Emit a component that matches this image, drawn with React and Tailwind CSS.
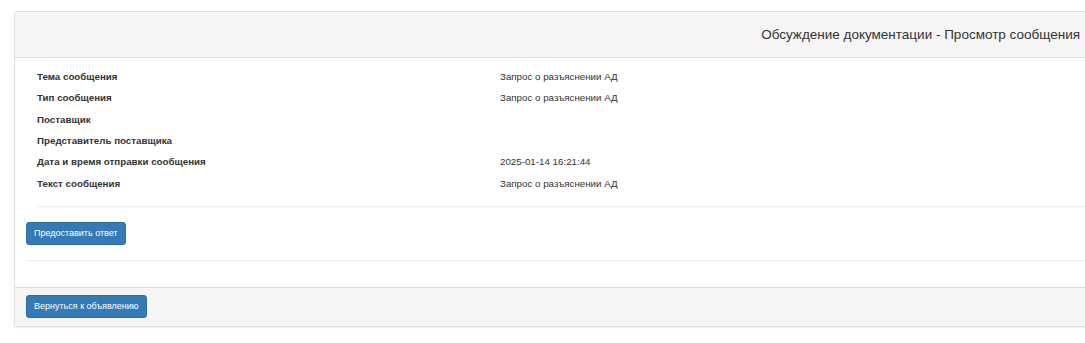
export default function App() {
  const rows = [
    ["Тема сообщения", "Запрос о разъяснении АД"],
    ["Тип сообщения", "Запрос о разъяснении АД"],
    ["Поставщик", ""],
    ["Представитель поставщика", ""],
    ["Дата и время отправки сообщения", "2025-01-14 16:21:44"],
    ["Текст сообщения", "Запрос о разъяснении АД"],
  ];
  return (
    <div className="w-[1085px] h-[343px] overflow-hidden bg-white text-[#333]" style={{ fontFamily: '"Liberation Sans", Arial, sans-serif' }}>
      <div className="pl-[14px] pt-[11px]">
        <div className="w-[1082px] border border-[#ddd] rounded-[3px] shadow-[0_1px_1px_rgba(0,0,0,0.05)]">
          <div className="h-[46px] bg-[#f5f5f5] border-b border-[#ddd] flex items-center justify-end pr-[15px]">
            <span className="text-[13.5px] leading-none">Обсуждение документации - Просмотр сообщения</span>
          </div>
          <div className="pl-[11px] pt-[8.5px]">
            <div className="pl-[11px]">
              {rows.map(([k, v], i) => (
                <div key={i} className="h-[21.4px] flex items-center text-[9.75px]">
                  <div className="w-[463px] font-bold">{k}</div>
                  <div>{v}</div>
                </div>
              ))}
              <div className="mt-[11.5px] border-t border-[#eee]" />
            </div>
            <div className="pt-[15px] flex">
              <button className="h-[23px] px-[7px] bg-[#337ab7] border border-[#2e6da4] rounded-[3px] text-white text-[9px] leading-none">
                Предоставить ответ
              </button>
            </div>
            <div className="mt-[15px] border-t border-[#eee]" />
            <div className="h-[26px]" />
          </div>
          <div className="bg-[#f5f5f5] border-t border-[#ddd] pl-[11px] pt-[7px] pb-[8px] flex">
            <button className="h-[23px] px-[7px] bg-[#337ab7] border border-[#2e6da4] rounded-[3px] text-white text-[9px] leading-none">
              Вернуться к объявлению
            </button>
          </div>
        </div>
      </div>
    </div>
  );
}
